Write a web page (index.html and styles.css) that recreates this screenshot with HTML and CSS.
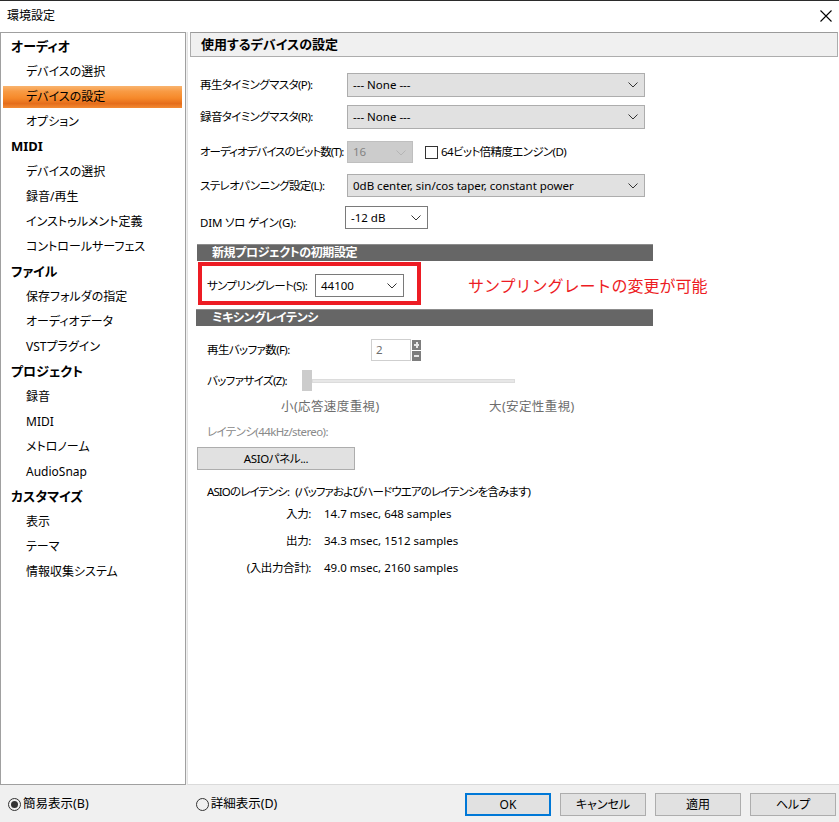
FILE: index.html
```html
<!DOCTYPE html>
<html lang="ja">
<head>
  <meta charset="UTF-8" />
  <title>環境設定</title>
  <link rel="stylesheet" href="styles.css">
</head>
<body>
<div class="window">
  <div class="titlebar">
    <span class="title">環境設定</span>
    <svg class="close" width="12" height="12" viewBox="0 0 12 12"><path d="M0.5 0.5 L11.5 11.5 M11.5 0.5 L0.5 11.5" stroke="#000" stroke-width="1.1" fill="none"/></svg>
  </div>

  <div class="main">
    <!-- ツリー -->
    <div class="nav">
      <div class="nav-head">オーディオ</div>
      <div class="nav-item">デバイスの選択</div>
      <div class="nav-item selected">デバイスの設定</div>
      <div class="nav-item">オプション</div>
      <div class="nav-head">MIDI</div>
      <div class="nav-item">デバイスの選択</div>
      <div class="nav-item">録音/再生</div>
      <div class="nav-item">インストゥルメント定義</div>
      <div class="nav-item">コントロールサーフェス</div>
      <div class="nav-head">ファイル</div>
      <div class="nav-item">保存フォルダの指定</div>
      <div class="nav-item">オーディオデータ</div>
      <div class="nav-item">VSTプラグイン</div>
      <div class="nav-head">プロジェクト</div>
      <div class="nav-item">録音</div>
      <div class="nav-item">MIDI</div>
      <div class="nav-item">メトロノーム</div>
      <div class="nav-item">AudioSnap</div>
      <div class="nav-head">カスタマイズ</div>
      <div class="nav-item">表示</div>
      <div class="nav-item">テーマ</div>
      <div class="nav-item">情報収集システム</div>
    </div>

    <div class="pane">
      <div class="pane-head">使用するデバイスの設定</div>

      <div class="form">
        <div class="row r1">
          <span class="label jp">再生タイミングマスタ(P):</span>
          <div class="select wide">--- None ---<svg class="chev" width="10" height="6"><polyline points="0.5,0.5 5,5 9.5,0.5" fill="none" stroke="#333"/></svg></div>
        </div>
        <div class="row r2">
          <span class="label jp">録音タイミングマスタ(R):</span>
          <div class="select wide">--- None ---<svg class="chev" width="10" height="6"><polyline points="0.5,0.5 5,5 9.5,0.5" fill="none" stroke="#333"/></svg></div>
        </div>
        <div class="row r3">
          <span class="label jp tight">オーディオデバイスのビット数(T):</span>
          <div class="select small disabled">16<svg class="chev" width="10" height="6"><polyline points="0.5,0.5 5,5 9.5,0.5" fill="none" stroke="#b5b5b5"/></svg></div>
          <span class="check"></span>
          <span class="jp">64ビット倍精度エンジン(D)</span>
        </div>
        <div class="row r4">
          <span class="label jp">ステレオパンニング設定(L):</span>
          <div class="select wide">0dB center, sin/cos taper, constant power<svg class="chev" width="10" height="6"><polyline points="0.5,0.5 5,5 9.5,0.5" fill="none" stroke="#333"/></svg></div>
        </div>
        <div class="row r5">
          <span class="label dim">DIM ソロ ゲイン(G):</span>
          <div class="select white dimsel">-12 dB<svg class="chev" width="10" height="6"><polyline points="0.5,0.5 5,5 9.5,0.5" fill="none" stroke="#333"/></svg></div>
        </div>

        <div class="section">新規プロジェクトの初期設定</div>
        <div class="rate-row">
          <div class="redbox">
            <span class="rate-label jp">サンプリングレート(S):</span>
            <div class="select white ratesel">44100<svg class="chev" width="10" height="6"><polyline points="0.5,0.5 5,5 9.5,0.5" fill="none" stroke="#333"/></svg></div>
          </div>
          <span class="note">サンプリングレートの変更が可能</span>
        </div>

        <div class="section s2">ミキシングレイテンシ</div>
        <div class="latency">
          <div class="lrow buf">
            <span class="buf-label jp">再生バッファ数(F):</span>
            <div class="spin-input">2</div>
            <div class="spin-btns">
              <span class="sb plus"></span>
              <span class="sb minus"></span>
            </div>
          </div>
          <div class="lrow size">
            <span class="size-label jp">バッファサイズ(Z):</span>
            <span class="thumb"></span>
            <span class="track"></span>
          </div>
          <div class="scale">
            <span class="lo">小(応答速度重視)</span>
            <span>大(安定性重視)</span>
          </div>
          <div class="grey lat jp">レイテンシ(44kHz/stereo):</div>
          <div class="btn asio">ASIOパネル...</div>
          <div class="asio-title">ASIOのレイテンシ: (バッファおよびハードウエアのレイテンシを含みます)</div>
          <div class="lat-grid">
            <span class="k">入力:</span><span>14.7 msec, 648 samples</span>
            <span class="k">出力:</span><span>34.3 msec, 1512 samples</span>
            <span class="k">(入出力合計):</span><span>49.0 msec, 2160 samples</span>
          </div>
        </div>
      </div>
    </div>
  </div>

  <div class="footer">
    <span class="radio on"></span><span class="rlabel">簡易表示(B)</span>
    <span class="radio r-second"></span><span class="rlabel">詳細表示(D)</span>
    <div class="buttons">
      <div class="btn fbtn default">OK</div>
      <div class="btn fbtn">キャンセル</div>
      <div class="btn fbtn">適用</div>
      <div class="btn fbtn">ヘルプ</div>
    </div>
  </div>
</div>
</body>
</html>
```

FILE: styles.css
```css
html, body {
  margin: 0;
  padding: 0;
  background: #f0f0f0;
}

body {
  font-family: "Noto Sans", "Noto Sans CJK JP", sans-serif;
  font-size: 12px;
  line-height: 16px;
  color: #000;
  font-feature-settings: "palt";
}

.window {
  width: 839px;
  height: 822px;
  display: flex;
  flex-direction: column;
  overflow: hidden;
}

.titlebar {
  height: 31px;
  border-top: 1px solid #2b2b2b;
  background: #fff;
  display: flex;
  align-items: center;
  padding-left: 7px;
  padding-right: 7px;
}

.title {
  flex: 1;
  margin-top: -2px;
}

.close {
  margin-top: -2px;
}

.main {
  height: 753px;
  display: flex;
}

/* ツリー */
.nav {
  width: 186px;
  box-sizing: border-box;
  background: #fff;
  border: 1px solid #a0a0a0;
  padding-top: 1px;
}

.nav-head,
.nav-item {
  height: 25px;
  line-height: 25px;
  white-space: nowrap;
}

.nav-head {
  font-weight: bold;
  font-size: 13px;
  padding-left: 10px;
}

.nav-item {
  padding-left: 23px;
  margin-left: 2px;
  margin-right: 3px;
}

.nav-item.selected {
  background: linear-gradient(to bottom, #f9b46f 0%, #f89a43 25%, #f6892a 55%, #e56d1b 80%, #f38b34 100%) center / 100% 22px no-repeat;
}

.pane {
  flex: 1;
  margin-left: 1px;
  background: #fff;
  border-left: 1px solid #e3e3e3;
  border-bottom: 1px solid #dadada;
  box-sizing: border-box;
}

.pane-head {
  height: 25px;
  box-sizing: border-box;
  margin: 0 1px 0 2px;
  background: #f0f0f0;
  border: 1px solid #adadad;
  border-top-color: #9a9a9a;
  font-weight: bold;
  font-size: 13px;
  line-height: 22px;
  padding-left: 10px;
}

.form {
  padding-left: 9px;
  font-size: 11.5px;
}

.jp {
  letter-spacing: -0.6px;
}

.jp.tight {
  letter-spacing: -0.95px;
}

.row {
  display: flex;
  align-items: center;
}

.label {
  width: 147px;
  padding-left: 3px;
  white-space: nowrap;
  flex-shrink: 0;
}

.r1 { margin-top: 16px; }
.r2 { margin-top: 8px; }
.r3 { margin-top: 12px; }
.r4 { margin-top: 11px; }
.r5 { margin-top: 9px; }

.label.dim {
  width: 145px;
  position: relative;
  top: 5px;
  letter-spacing: -0.2px;
}

.select {
  position: relative;
  box-sizing: border-box;
  height: 23px;
  line-height: 21px;
  border: 1px solid #adadad;
  background: #e1e1e1;
  padding-left: 5px;
  white-space: nowrap;
}

.chev {
  position: absolute;
  right: 6px;
  top: 8px;
}

.select.wide {
  width: 298px;
}

.r1 .select, .r2 .select {
  height: 24px;
  line-height: 22px;
}

.select.small {
  width: 66px;
  height: 22px;
  line-height: 20px;
}

.select.disabled {
  background: #cccccc;
  border-color: #bfbfbf;
  color: #838383;
}

.select.white {
  background: #fff;
  border-color: #7a7a7a;
}

.dimsel {
  width: 83px;
}

.ratesel {
  width: 89px;
}

.check {
  width: 13px;
  height: 13px;
  box-sizing: border-box;
  border: 1px solid #333;
  margin-left: 12px;
  margin-right: 3px;
}

.section {
  margin-top: 15px;
  width: 456px;
  height: 17px;
  box-sizing: border-box;
  background: #666;
  border-top: 1px solid #8c8c8c;
  color: #fff;
  font-weight: bold;
  font-size: 12px;
  letter-spacing: -0.4px;
  line-height: 15px;
  padding-left: 15px;
}

.section.s2 {
  margin-top: 4px;
  margin-left: -1px;
  width: 457px;
  padding-left: 16px;
}

.rate-row {
  display: flex;
  align-items: center;
  margin-top: 1px;
}

.redbox {
  width: 223px;
  height: 43px;
  box-sizing: border-box;
  border: 4px solid #ed1c24;
  margin-left: 1px;
  display: flex;
  align-items: center;
  padding-left: 5px;
  padding-top: 4px;
}

.rate-label {
  width: 108px;
  white-space: nowrap;
  flex-shrink: 0;
}

.note {
  margin-left: 47px;
  color: #ed1c24;
  font-size: 16px;
  line-height: 20px;
  font-feature-settings: normal;
  margin-top: 5px;
  white-space: nowrap;
}

.latency {
  padding-left: 10px;
}

.lrow {
  display: flex;
  align-items: center;
}

.buf {
  margin-top: 13px;
}

.buf-label {
  width: 164px;
}

.spin-input {
  width: 40px;
  height: 22px;
  box-sizing: border-box;
  border: 1px solid #cfcfcf;
  color: #6d6d6d;
  line-height: 20px;
  padding-left: 4px;
}

.spin-btns {
  display: flex;
  flex-direction: column;
  gap: 1px;
  margin-left: 1px;
}

.sb {
  position: relative;
  width: 9px;
  height: 10px;
  background: #7d7d7d;
}

.sb::before {
  content: "";
  position: absolute;
  left: 2px;
  top: 4px;
  width: 5px;
  height: 2px;
  background: #e6e6e6;
}

.sb.plus::after {
  content: "";
  position: absolute;
  left: 3.5px;
  top: 2px;
  width: 2px;
  height: 6px;
  background: #e6e6e6;
}

.size {
  margin-top: 9px;
}

.size-label {
  width: 95px;
  white-space: nowrap;
}

.thumb {
  width: 10px;
  height: 21px;
  background: #cccccc;
}

.track {
  width: 203px;
  height: 4px;
  box-sizing: border-box;
  background: #e7e7e7;
  border: 1px solid #dcdcdc;
  margin-top: 1px;
}

.scale {
  display: flex;
  margin-top: 8px;
  padding-left: 74px;
  color: #6d6d6d;
  font-size: 12.5px;
  letter-spacing: 0.4px;
  font-feature-settings: normal;
}

.scale .lo {
  width: 208px;
}

.grey {
  color: #8a8a8a;
}

.lat {
  margin-top: 9px;
}

.btn {
  box-sizing: border-box;
  border: 1px solid #adadad;
  background: #e1e1e1;
  text-align: center;
}

.asio {
  width: 158px;
  height: 23px;
  line-height: 21px;
  margin-left: -10px;
  margin-top: 7px;
  letter-spacing: -0.4px;
}

.asio-title {
  margin-top: 14px;
  letter-spacing: -0.9px;
  word-spacing: 4px;
  white-space: nowrap;
}

.lat-grid {
  display: grid;
  grid-template-columns: 104px auto;
  column-gap: 13px;
  row-gap: 11px;
  margin-top: 6px;
}

.lat-grid .k {
  text-align: right;
  letter-spacing: -0.4px;
}

.footer {
  flex: 1;
  display: flex;
  align-items: center;
  padding-left: 8px;
}

.radio {
  width: 13px;
  height: 13px;
  box-sizing: border-box;
  border: 1px solid #333;
  border-radius: 50%;
  position: relative;
  margin-top: 2px;
}

.radio.on::after {
  content: "";
  position: absolute;
  left: 2px;
  top: 2px;
  width: 7px;
  height: 7px;
  border-radius: 50%;
  background: #333;
}

.rlabel {
  margin-left: 2px;
  font-size: 12.5px;
}

.radio.r-second {
  margin-left: 107px;
}

.buttons {
  display: flex;
  gap: 9px;
  margin-left: auto;
  margin-right: 3px;
  margin-top: 1px;
}

.fbtn {
  width: 86px;
  height: 23px;
  line-height: 21px;
}

.fbtn.default {
  border: 2px solid #0078d7;
  line-height: 19px;
}
```
